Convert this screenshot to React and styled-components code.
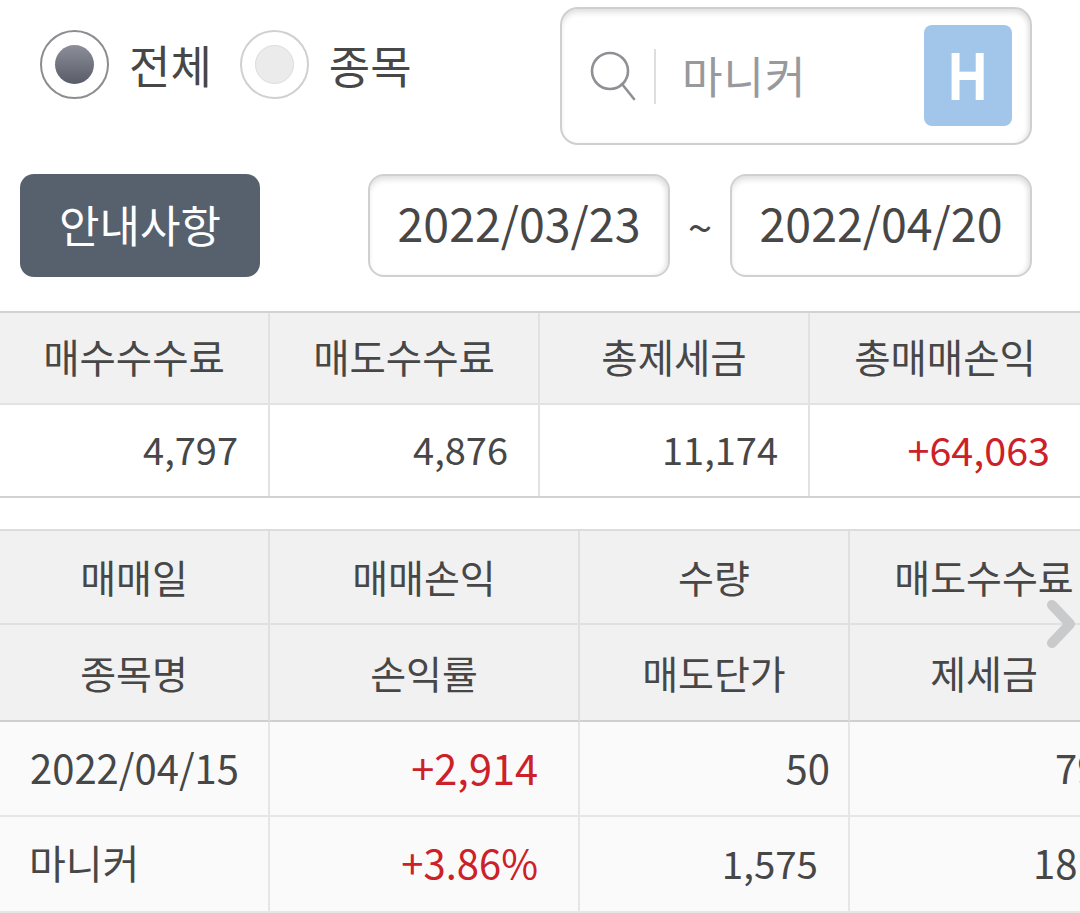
import React from 'react'
import styled, { createGlobalStyle } from 'styled-components'

const textColor = '#474747'

const GlobalStyle = createGlobalStyle`
  html, body {
    margin: 0;
    padding: 0;
    background: #fff;
  }
  * {
    box-sizing: border-box;
  }
  body {
    font-family: 'Noto Sans CJK KR', 'Noto Sans', sans-serif;
    font-weight: 400;
    color: ${textColor};
  }
`

const summaryHead = ['매수수수료', '매도수수료', '총제세금', '총매매손익']
const summaryBody = [
  { value: '4,797' },
  { value: '4,876' },
  { value: '11,174' },
  { value: '+64,063', red: true },
]

const tradeRows = [
  { cells: ['매매일', '매매손익', '수량', '매도수수료'], head: true },
  { cells: ['종목명', '손익률', '매도단가', '제세금'], head: true, strong: true },
  {
    cells: [
      { value: '2022/04/15', left: 30 },
      { value: '+2,914', red: true, right: 40, size: 41.5 },
      { value: '50', right: 18 },
      { value: '79', left: 205 },
    ],
  },
  {
    cells: [
      { value: '마니커', left: 29 },
      { value: '+3.86%', red: true, right: 40 },
      { value: '1,575', right: 30, size: 38.5 },
      { value: '18', left: 183 },
    ],
  },
]

const App = () => {
  return (
    <Page>
      <GlobalStyle />
      <TopRow>
        <RadioGroup>
          <RadioItem>
            <RadioRing $active>
              <RadioDot $active />
            </RadioRing>
            전체
          </RadioItem>
          <RadioItem>
            <RadioRing>
              <RadioDot />
            </RadioRing>
            종목
          </RadioItem>
        </RadioGroup>
        <SearchBox>
          <svg width="46" height="50" viewBox="0 0 46 50" fill="none" stroke="#8e9093" strokeWidth="2.6">
            <circle cx="20" cy="20" r="18" />
            <path d="M32 33 L44 48" strokeLinecap="round" />
          </svg>
          <SearchDivider />
          <SearchText>마니커</SearchText>
          <HBadge>
            <HLetter>H</HLetter>
          </HBadge>
        </SearchBox>
      </TopRow>

      <DateRow>
        <NoticeButton>안내사항</NoticeButton>
        <DateGroup>
          <DateBox>2022/03/23</DateBox>
          <Tilde>~</Tilde>
          <DateBox>2022/04/20</DateBox>
        </DateGroup>
      </DateRow>

      <SummaryTable>
        {summaryHead.map((label) => (
          <HeadCell key={label}>{label}</HeadCell>
        ))}
        {summaryBody.map((item) => (
          <ValueCell key={item.value} $red={item.red}>
            {item.value}
          </ValueCell>
        ))}
      </SummaryTable>

      <TradeWrap>
        <TradeTable>
          {tradeRows.map((row) =>
            row.cells.map((cell) =>
              row.head ? (
                <TradeHeadCell key={cell} $strong={row.strong}>
                  {cell}
                </TradeHeadCell>
              ) : (
                <TradeCell
                  key={cell.value}
                  $red={cell.red}
                  $left={cell.left}
                  $right={cell.right}
                  $size={cell.size}
                >
                  {cell.value}
                </TradeCell>
              )
            )
          )}
        </TradeTable>
        <ScrollArrow>
          <svg width="30" height="50" viewBox="0 0 30 50" fill="none" stroke="#c9cacc" strokeWidth="10">
            <path d="M6 6 L24 25 L6 44" strokeLinecap="round" strokeLinejoin="round" />
          </svg>
        </ScrollArrow>
      </TradeWrap>
    </Page>
  )
}

export default App

const Page = styled.div`
  width: 1080px;
  height: 913px;
  overflow: hidden;
  padding-top: 7px;
`

const TopRow = styled.div`
  display: flex;
  justify-content: space-between;
  padding: 0 48px 0 40px;
  height: 138px;
`

const RadioGroup = styled.div`
  display: flex;
  gap: 28px;
  padding-top: 23px;
  height: 92px;
`

const RadioItem = styled.div`
  display: flex;
  align-items: center;
  gap: 20px;
  font-size: 45px;
  line-height: 68px;
  height: 69px;
`

const RadioRing = styled.div`
  width: 69px;
  height: 69px;
  border-radius: 50%;
  border: 2px solid ${({ $active }) => ($active ? '#8b8d90' : '#d0d0d0')};
  display: flex;
  align-items: center;
  justify-content: center;
`

const RadioDot = styled.div`
  width: 39px;
  height: 39px;
  border-radius: 50%;
  background: ${({ $active }) =>
    $active ? 'linear-gradient(#8c8f99, #585c68)' : '#ebebeb'};
  border: ${({ $active }) => ($active ? 'none' : '1px solid #dcdcdc')};
`

const SearchBox = styled.div`
  width: 472px;
  height: 138px;
  border: 2px solid #cfcfcf;
  border-radius: 18px;
  box-shadow: inset 0 5px 6px -2px #dcdcdc, inset -4px 0 5px -2px #e6e6e6;
  display: flex;
  align-items: center;
  padding: 0 18px 0 28px;
`

const SearchDivider = styled.div`
  width: 2px;
  height: 55px;
  background: #dedede;
  margin-left: 18px;
`

const SearchText = styled.div`
  flex: 1;
  padding-left: 26px;
  padding-bottom: 2px;
  font-size: 44px;
  letter-spacing: 1px;
  color: #97999c;
`

const HBadge = styled.div`
  width: 88px;
  height: 101px;
  margin-top: -1px;
  border-radius: 8px;
  background: #a2c6e9;
  color: #fff;
  display: flex;
  align-items: center;
  justify-content: center;
`

const HLetter = styled.span`
  font-family: 'Liberation Sans', sans-serif;
  font-weight: 700;
  font-size: 68px;
  line-height: 1;
  transform: scaleX(0.8);
`

const DateRow = styled.div`
  display: flex;
  justify-content: space-between;
  padding: 29px 48px 0 20px;
  height: 166px;
`

const NoticeButton = styled.div`
  width: 240px;
  height: 103px;
  border-radius: 14px;
  background: #57616e;
  color: #fff;
  font-size: 44px;
  padding-bottom: 4px;
  display: flex;
  align-items: center;
  justify-content: center;
`

const DateGroup = styled.div`
  display: flex;
  align-items: flex-start;
`

const DateBox = styled.div`
  width: 302px;
  height: 103px;
  border: 2px solid #d0d0d0;
  border-radius: 16px;
  box-shadow: inset 0 5px 6px -2px #dcdcdc, inset -4px 0 5px -2px #e6e6e6;
  font-size: 46.5px;
  padding-bottom: 8px;
  display: flex;
  align-items: center;
  justify-content: center;
`

const Tilde = styled.div`
  width: 60px;
  height: 103px;
  font-size: 44px;
  display: flex;
  align-items: center;
  justify-content: center;
`

const SummaryTable = styled.div`
  display: grid;
  grid-template-columns: 270px 270px 270px 270px;
  grid-template-rows: 92px 91px;
  border-top: 2px solid #d2d2d2;
  border-bottom: 2px solid #d2d2d2;
`

const HeadCell = styled.div`
  background: #f1f1f1;
  border-right: 2px solid #e2e2e2;
  border-bottom: 2px solid #e2e2e2;
  font-size: 39.5px;
  padding-bottom: 5px;
  display: flex;
  align-items: center;
  justify-content: center;
  &:nth-child(4n) {
    border-right: none;
  }
`

const ValueCell = styled.div`
  border-right: 2px solid #e2e2e2;
  font-size: ${({ $red }) => ($red ? '39.5px' : '38px')};
  color: ${({ $red }) => ($red ? '#cc2128' : textColor)};
  padding: 0 30px 5px 0;
  display: flex;
  align-items: center;
  justify-content: flex-end;
  &:nth-child(4n) {
    border-right: none;
  }
`

const TradeWrap = styled.div`
  position: relative;
  margin-top: 31px;
  overflow: hidden;
`

const TradeTable = styled.div`
  display: grid;
  width: 1120px;
  grid-template-columns: 270px 310px 270px 270px;
  grid-template-rows: 94px 97px 95px 96px;
  border-top: 2px solid #dcdcdc;
`

const TradeHeadCell = styled.div`
  background: #f1f1f1;
  border-right: 2px solid #e0e0e0;
  border-bottom: 2px solid ${({ $strong }) => ($strong ? '#cfcfcf' : '#e0e0e0')};
  font-size: 39px;
  padding-bottom: 2px;
  display: flex;
  align-items: center;
  justify-content: center;
  white-space: nowrap;
`

const TradeCell = styled.div`
  background: #fafafa;
  border-right: 2px solid #e6e6e6;
  border-bottom: 2px solid #e6e6e6;
  font-size: ${({ $size }) => $size || 40}px;
  color: ${({ $red }) => ($red ? '#cc2128' : textColor)};
  display: flex;
  align-items: center;
  justify-content: ${({ $left }) => ($left ? 'flex-start' : 'flex-end')};
  padding-bottom: 4px;
  padding-left: ${({ $left }) => $left || 0}px;
  padding-right: ${({ $right }) => $right || 0}px;
  white-space: nowrap;
`

const ScrollArrow = styled.div`
  position: absolute;
  top: 70px;
  right: 4px;
`
